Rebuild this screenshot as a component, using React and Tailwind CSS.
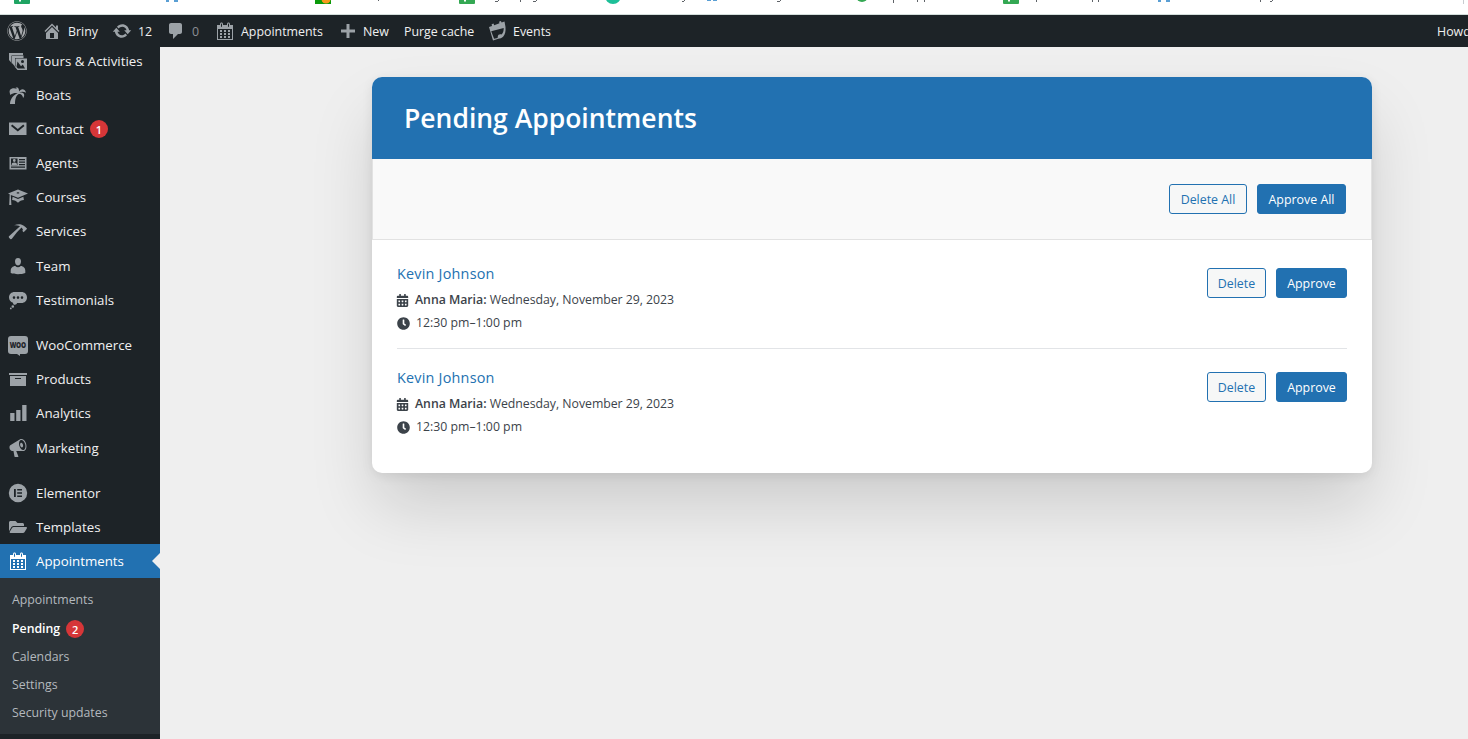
import React from 'react';
import { FaWordpress, FaFolderOpen, FaCalendarAlt, FaClock } from 'react-icons/fa';

// 20x20 admin icons
const paths = {
  home: 'M16 8.5l1.53 1.53-1.06 1.06L10 4.6l-6.47 6.49-1.06-1.06L10 2.5l4 4v-2h2v4zm-6-2.46l6 5.99V18H4v-5.97zM12 17v-5H8v5h4z',
  update: 'M10.2 3.28c3.53 0 6.43 2.61 6.92 6h2.08l-3.5 4-3.5-4h2.32c-.45-1.97-2.21-3.45-4.32-3.45-1.45 0-2.73.71-3.54 1.78L4.95 5.66C6.23 4.2 8.11 3.28 10.2 3.28zm-.4 13.44c-3.52 0-6.43-2.61-6.92-6H.8l3.5-4c1.17 1.33 2.33 2.67 3.5 4H5.48c.45 1.97 2.21 3.45 4.32 3.45 1.45 0 2.73-.71 3.54-1.78l1.71 1.95c-1.28 1.46-3.15 2.38-5.25 2.38z',
  comment: 'M5 2h9c1.1 0 2 .9 2 2v7c0 1.1-.9 2-2 2h-2l-5 5v-5H5c-1.1 0-2-.9-2-2V4c0-1.1.9-2 2-2z',
  plus: 'M17 8.5v3h-5.5V17h-3v-5.5H3v-3h5.5V3h3v5.5z',
  calendar: 'M15 4h3v15H2V4h3V3c0-.41.15-.76.44-1.06.29-.29.65-.44 1.06-.44s.77.15 1.06.44c.29.3.44.65.44 1.06v1h4V3c0-.41.15-.76.44-1.06.29-.29.65-.44 1.06-.44s.77.15 1.06.44c.29.3.44.65.44 1.06v1zM6 3v2.5c0 .14.05.26.15.36.09.09.21.14.35.14s.26-.05.35-.14c.1-.1.15-.22.15-.36V3c0-.14-.05-.26-.15-.35-.09-.1-.21-.15-.35-.15s-.26.05-.35.15c-.1.09-.15.21-.15.35zm7 0v2.5c0 .14.05.26.14.36.1.09.22.14.36.14s.26-.05.36-.14c.09-.1.14-.22.14-.36V3c0-.14-.05-.26-.14-.35-.1-.1-.22-.15-.36-.15s-.26.05-.36.15c-.09.09-.14.21-.14.35zM17 18V8H3v10h14zM7 9v2H5V9h2zm2 0h2v2H9V9zm4 2V9h2v2h-2zm-6 1v2H5v-2h2zm2 0h2v2H9v-2zm4 2v-2h2v2h-2zm-6 1v2H5v-2h2zm4 2H9v-2h2v2zm4 0h-2v-2h2v2z',
  events: 'M1 6l3-1-.4-1.7 1.9-.7.7 1.7 5.3-2-.5-1.6 1.9-.7.7 1.6 2.9-1 1 5.4c.3 4-.2 7.5-2.4 9.8-1.3 1.4-3 1.7-4.8 2L5 19.5zm2.2 4.2l2.9 7.6 3.5-.7c.2-1.2.1-2.5 1-3.3.9-.8 2-.7 2.9-.3 1.7-1.5 2.3-3.5 2.2-6.5z',
  images: 'M1 2h14v2H4v8.5L1 9zM3.5 4.5h12V7H7v8.5l-3.5-4zM7.5 7.5H19V19H9.5l-3-3.5h1zM8.5 16l1.5 1.5h7l-2.2-4-1.8 1.7-3.5-4.7zM14.5 9a1.5 1.5 0 100 3 1.5 1.5 0 000-3z',
  palm: 'M8.58 2.39c.32 0 .59.05.81.14 1.25.55 1.69 2.24 1.7 3.97.59-.82 2.15-2.29 3.41-2.29s2.94.73 3.53 3.55c-1.13-.65-2.42-.94-3.65-.94-1.26 0-2.45.32-3.29.89.4-.11.86-.16 1.33-.16 1.39 0 2.9.45 3.4 1.31.68 1.16.47 3.38-.76 4.14-.14-2.1-1.69-4.12-3.47-4.12-.44 0-.88.12-1.33.38C8 10.62 7 14.56 7 19H2c0-5.53 4.21-9.65 7.68-10.79-.56-.09-1.17-.15-1.82-.15C6.1 8.06 4.05 8.5 2.35 10c-.48-1.3-.78-2.43-.78-3.4 0-.86.24-1.57.76-2.09 1.05-.96 2.32-1.35 3.53-1.35 1.11 0 2.17.33 3 .83-.32-.58-.73-1.13-1.28-1.6z',
  mail: 'M1 3.5h17.5V16H1zm3.2 2L3 7l6.8 5.5L16.5 7l-1.2-1.5-5.5 4.4z',
  id: 'M1.5 4h17v12.5h-17zM3 5.5v6.8h6.5V5.5zM3 13.5v1.2h14v-1.2zM11 6v1.2h6V6zm0 2.5v1.2h6V8.5zm0 2.5v1.2h6V11zM4.9 7.5a1.4 1.4 0 112.8 0 1.4 1.4 0 01-2.8 0zM3.6 12c0-2 1-2.6 2.7-2.6s2.7.6 2.7 2.6z',
  learn: 'M10 2.5l10 4-10 4.3-7.2-2.9.6 10.1H1.2L1.7 7.3 0 6.5zm0 2.7c-.8 0-1.4.3-1.4.7s.6.7 1.4.7 1.4-.3 1.4-.7-.6-.7-1.4-.7zM4.6 9.8L10 12l5.4-2.2.5 3.2c-2.3.2-4.5 1.2-5.9 2.7-1.4-1.5-3.6-2.5-5.9-2.7z',
  hammer: 'M17.7 6.32l1.41 1.42-3.47 3.41-1.42-1.42.84-.82c-.32-.76-.81-1.57-1.51-2.31l-4.61 4.59-5.06 6.5c-.39.59-1.02.59-1.62.2l-1.2-1.21c-.39-.59-.39-1.22.2-1.61L12 5.35c-1.37-.86-3.41-1.06-5.87-1.08 2.7-1.12 5.35-1.33 6.98-.7 1.7.66 2.82 1.2 4.59 2.75z',
  user: 'M10 9.5c-2.1 0-3-2-3-4.2C7 3.2 8.2 2 10 2s3 1.2 3 3.3c0 2.2-.9 4.2-3 4.2zM7.3 10c.8.8 1.7 1.2 2.7 1.2s1.9-.4 2.7-1.2c2.6 0 4.6 2.3 4.6 4.5V17c-2.1.8-4.6 1.2-7.3 1.2S4.8 17.8 2.7 17v-2.5C2.7 12.3 4.7 10 7.3 10z',
  thought: 'M6.5 2h7C16.5 2 19 4.2 19 7.5S16.5 13 13.5 13H9c-.2 1.7-2.8 2.4-3.7.9-.3-.4-.3-.8-.3-1.2C2.6 12.1 1 10 1 7.5 1 4.2 3.5 2 6.5 2zM6 6.3a1.3 1.3 0 100 2.6 1.3 1.3 0 000-2.6zm4 0a1.3 1.3 0 100 2.6 1.3 1.3 0 000-2.6zm4 0a1.3 1.3 0 100 2.6 1.3 1.3 0 000-2.6zM4.8 15.2a1.3 1.3 0 110 2.6 1.3 1.3 0 010-2.6zM2.8 17.5a.9.9 0 110 1.8.9.9 0 010-1.8z',
  archive: 'M19 4v2H1V4h18zM2 7h16v10H2V7zm11 3V9H7v1h6z',
  chart: 'M18.5 18V2h-4.3v16zm-6 0V7H8.2v11zm-6 0v-8H2.2v8z',
  megaphone: 'M18.15 5.94c.46 1.62.38 3.22-.02 4.48-.42 1.28-1.26 2.18-2.3 2.48-.16.06-.26.06-.4.06-.06.02-.12.02-.18.02-.06.02-.14.02-.22.02h-6.8l2.22 5.5c.02.14-.06.26-.14.34-.08.1-.24.16-.34.16H6.95c-.1 0-.26-.06-.34-.16-.08-.08-.16-.2-.14-.34l-1-5.5H4.25l-.02-.02c-.5.06-1.08-.18-1.54-.62s-.88-1.08-1.06-1.88c-.24-.8-.2-1.56-.02-2.2.18-.62.58-1.08 1.06-1.3l.02-.02 9-5.4c.1-.06.18-.1.24-.16.06-.04.14-.08.24-.12.16-.08.28-.12.5-.18 1.04-.3 2.24.1 3.22.98s1.84 2.24 2.26 3.86zm-2.58 5.98h-.02c.4-.1.74-.34 1.04-.7.58-.7.86-1.76.86-3.04 0-.64-.1-1.3-.28-1.98-.34-1.36-1.02-2.5-1.78-3.24s-1.68-1.1-2.46-.88c-.82.22-1.4.96-1.7 2-.32 1.04-.28 2.36.06 3.72.38 1.36 1 2.5 1.8 3.24.78.74 1.62 1.1 2.48.88zm-2.54-7.08c.22-.04.42-.02.62.04.38.16.76.48 1.02 1s.42 1.2.42 1.78c0 .3-.04.56-.12.8-.18.48-.44.84-.86.94-.34.1-.8-.06-1.14-.4s-.64-.86-.78-1.5c-.18-.62-.12-1.24.02-1.72s.48-.84.82-.94z',
  elementor: 'M10 .8a9.2 9.2 0 100 18.4A9.2 9.2 0 0010 .8zM6 6h1.8v8H6zm3.2 0H14v1.6H9.2zm0 3.2H14v1.6H9.2zm0 3.2H14V14H9.2z',
};

const Icon = ({ name, className = 'size-5' }) => (
  <svg viewBox="0 0 20 20" className={className} fill="currentColor" fillRule="evenodd">
    <path d={paths[name]} />
  </svg>
);

const WooIcon = () => (
  <span className="relative flex h-[18px] w-5 items-center justify-center rounded-[3px] bg-[#9ca2a7] text-[#1d2327]">
    <span className="scale-x-75 text-[8.5px] font-extrabold leading-none tracking-[-0.3px]">WOO</span>
    <span className="absolute left-[9px] top-[18px] border-l-[3px] border-t-2 border-l-transparent border-t-[#9ca2a7]" />
  </span>
);

const menu = [
  [
    { icon: 'images', label: 'Tours & Activities' },
    { icon: 'palm', label: 'Boats' },
    { icon: 'mail', label: 'Contact', count: 1 },
    { icon: 'id', label: 'Agents' },
    { icon: 'learn', label: 'Courses' },
    { icon: 'hammer', label: 'Services' },
    { icon: 'user', label: 'Team' },
    { icon: 'thought', label: 'Testimonials' },
  ],
  [
    { icon: 'woo', label: 'WooCommerce' },
    { icon: 'archive', label: 'Products' },
    { icon: 'chart', label: 'Analytics' },
    { icon: 'megaphone', label: 'Marketing' },
  ],
  [
    { icon: 'elementor', label: 'Elementor' },
    { icon: 'folder', label: 'Templates' },
    { icon: 'calendar', label: 'Appointments', active: true },
  ],
];

const submenu = [
  { label: 'Appointments' },
  { label: 'Pending', count: 2 },
  { label: 'Calendars' },
  { label: 'Settings' },
  { label: 'Security updates' },
];

const appointments = [
  { id: 1, name: 'Kevin Johnson', calendar: 'Anna Maria', date: 'Wednesday, November 29, 2023', time: '12:30 pm–1:00 pm' },
  { id: 2, name: 'Kevin Johnson', calendar: 'Anna Maria', date: 'Wednesday, November 29, 2023', time: '12:30 pm–1:00 pm' },
];

const Count = ({ value }) => (
  <span className="ml-1.5 mt-px flex size-[18px] items-center justify-center rounded-full bg-[#d63638] text-[11px] font-semibold leading-none text-white">
    {value}
  </span>
);

// Lower edge of the browser's bookmarks bar
const BookmarksBar = () => (
  <div className="h-[15px] shrink-0 border-b border-[#d3dedb] bg-white">
    <svg width="1468" height="14" viewBox="0 0 1468 14" className="block">
      <g fill="#1fa463">
        <rect x="14" y="-6" width="16" height="10" rx="1" />
        <rect x="459" y="-6" width="16" height="10" rx="1" fill="#34a853" />
        <rect x="1003" y="-6" width="16" height="10" rx="1" fill="#34a853" />
      </g>
      <g fill="#fff">
        <rect x="19" y="0" width="2" height="1.5" />
        <rect x="464" y="0" width="2" height="1.5" />
        <rect x="1008" y="0" width="2" height="1.5" />
      </g>
      <rect x="315" y="-6" width="16" height="10" fill="#0a9a0a" />
      <circle cx="326" cy="-1" r="4.5" fill="#f79a1e" />
      <circle cx="613" cy="-4" r="8" fill="#1dbf98" />
      <circle cx="862" cy="-4" r="6" fill="#34a853" />
      <g fill="#5a9fd4">
        <rect x="166" y="0" width="3" height="2" />
        <rect x="174" y="0" width="4" height="2" />
        <rect x="707" y="0" width="4" height="1" />
        <rect x="713" y="0" width="4" height="1" />
        <rect x="1158" y="0" width="3" height="2" />
        <rect x="1166" y="0" width="4" height="2" />
      </g>
      <g fill="#5f6368">
        <rect x="378" y="0" width="1" height="1" />
        <rect x="495" y="1" width="3" height="1" />
        <rect x="498" y="0" width="1" height="1" />
        <rect x="520" y="0" width="1" height="2" />
        <rect x="533" y="1" width="3" height="1" />
        <rect x="536" y="0" width="1" height="1" />
        <rect x="682" y="1" width="2" height="1" />
        <rect x="684" y="0" width="1" height="1" />
        <rect x="777" y="1" width="3" height="1" />
        <rect x="780" y="0" width="1" height="1" />
        <rect x="893" y="0" width="1" height="3" />
        <rect x="917" y="0" width="1" height="2" />
        <rect x="924" y="0" width="1" height="2" />
        <rect x="1036" y="0" width="1" height="2" />
        <rect x="1092" y="0" width="1" height="2" />
        <rect x="1098" y="0" width="1" height="2" />
        <rect x="1260" y="0" width="1" height="2" />
        <rect x="1270" y="1" width="2" height="1" />
        <rect x="1272" y="0" width="1" height="1" />
      </g>
      <rect x="1463" y="0" width="1" height="4" fill="#c8ccd0" />
    </svg>
  </div>
);

const AdminBar = () => (
  <header className="flex h-8 shrink-0 items-center overflow-hidden whitespace-nowrap bg-[#1d2327] pl-[7px] text-[12.4px] text-[#f0f0f1]">
    <FaWordpress className="size-5 shrink-0 text-[#a7aaad]" />
    <div className="ml-[15px] flex w-[70px] shrink-0 items-center">
      <Icon name="home" className="mr-1.5 size-5 text-[#9ca2a7]" />
      <span className="pt-0.5">Briny</span>
    </div>
    <div className="flex w-[54px] shrink-0 items-center">
      <Icon name="update" className="mr-1.5 size-5 text-[#9ca2a7]" />
      <span className="pt-0.5">12</span>
    </div>
    <div className="flex w-[49px] shrink-0 items-center text-[#8c8f94]">
      <Icon name="comment" className="mr-1.5 size-5 text-[#9ca2a7]" />
      <span className="pt-0.5">0</span>
    </div>
    <div className="flex w-[123px] shrink-0 items-center">
      <Icon name="calendar" className="mr-1.5 size-5 text-[#9ca2a7]" />
      <span className="pt-0.5">Appointments</span>
    </div>
    <div className="flex w-[66px] shrink-0 items-center">
      <Icon name="plus" className="mr-[5px] size-5 text-[#9ca2a7]" />
      <span className="pt-0.5">New</span>
    </div>
    <div className="w-[84px] shrink-0 pt-0.5">Purge cache</div>
    <div className="flex shrink-0 items-center">
      <Icon name="events" className="mr-[5px] size-5 text-[#9ca2a7]" />
      <span className="pt-0.5">Events</span>
    </div>
    <div className="ml-auto w-[31px] shrink-0 overflow-hidden pt-0.5">Howdy</div>
  </header>
);

const MenuIcon = ({ name }) => {
  if (name === 'woo') return <WooIcon />;
  if (name === 'folder') return <FaFolderOpen className="size-[18px]" />;
  return <Icon name={name} />;
};

const MenuItem = ({ item }) => (
  <li
    className={
      item.active
        ? 'relative flex h-[34.2px] items-center bg-[#2271b1] text-white'
        : 'flex h-[34.2px] items-center text-[#f0f0f1]'
    }
  >
    <span className={item.active ? 'flex w-9 justify-center text-white' : 'flex w-9 justify-center text-[#9ca2a7]'}>
      <MenuIcon name={item.icon} />
    </span>
    <span>{item.label}</span>
    {item.count && <Count value={item.count} />}
    {item.active && (
      <span className="absolute right-0 top-[9px] border-y-8 border-r-8 border-y-transparent border-r-[#efefef]" />
    )}
  </li>
);

const Sidebar = () => (
  <aside className="w-40 shrink-0 overflow-hidden bg-[#1d2327]">
    <nav className="-mt-[3.6px] text-[13.3px] leading-[18px]">
      {menu.map((group, i) => (
        <ul key={i} className={i > 0 ? 'mt-[11px]' : ''}>
          {group.map((item) => (
            <MenuItem key={item.label} item={item} />
          ))}
        </ul>
      ))}
      <ul className="bg-[#2c3338] pb-[6.5px] pt-[7.6px] text-[12.3px] text-[#b4b9be]">
        {submenu.map((item) => (
          <li
            key={item.label}
            className={item.count ? 'flex h-[29.5px] items-center pl-3 font-semibold text-white' : 'flex h-[28px] items-center pl-3'}
          >
            {item.label}
            {item.count && <Count value={item.count} />}
          </li>
        ))}
      </ul>
    </nav>
  </aside>
);

const Button = ({ primary, className, children }) => (
  <button
    type="button"
    className={`h-[30px] rounded-[3px] border border-[#2271b1] pt-0.5 text-[12.4px] ${
      primary ? 'bg-[#2271b1] text-white' : 'bg-[#f6f7f7] text-[#2271b1]'
    } ${className}`}
  >
    {children}
  </button>
);

const Appointment = ({ item }) => (
  <li className="flex items-start justify-between border-t border-[#e2e4e7] pb-[13px] pt-[19px] first:border-t-0">
    <div className="text-[12.3px] text-[#3c434a]">
      <h2 className="-mt-px text-[14.4px] font-medium leading-[22px] tracking-[0.22px] text-[#2271b1]">{item.name}</h2>
      <p className="mt-1 flex h-[22px] items-center">
        <FaCalendarAlt className="mr-[5px] size-[13px] -translate-x-px" />
        <span className="tracking-[-0.03px]">
          <span className="font-semibold">{item.calendar}:</span> {item.date}
        </span>
      </p>
      <p className="mt-px flex h-[23px] items-center">
        <FaClock className="mr-1.5 size-[13px]" />
        {item.time}
      </p>
    </div>
    <div className="mt-1 flex gap-2.5">
      <Button className="w-[59px]">Delete</Button>
      <Button primary className="w-[71px]">Approve</Button>
    </div>
  </li>
);

const App = () => {
  return (
    <div className="flex h-[739px] w-[1468px] flex-col overflow-hidden bg-[#efefef] font-['Open_Sans','Noto_Sans',sans-serif]">
      <BookmarksBar />
      <AdminBar />
      <div className="flex min-h-0 flex-1">
        <Sidebar />
        <main className="flex-1 pl-[212px] pt-[30px]">
          <section className="h-[396px] w-[1000px] overflow-hidden rounded-[10px] bg-white shadow-[0_36px_66px_-4px_rgba(0,0,0,0.15),0_3px_12px_rgba(0,0,0,0.08)]">
            <div className="flex h-[82px] items-center bg-[#2271b1] px-8 pt-0.5">
              <h1 className="text-[26.5px] font-semibold text-white">Pending Appointments</h1>
            </div>
            <div className="flex h-[81px] items-center justify-end gap-2.5 border border-t-0 border-[#e2e2e2] bg-[#f9f9f9] px-[25px]">
              <Button className="w-[78px]">Delete All</Button>
              <Button primary className="w-[89px]">Approve All</Button>
            </div>
            <ul className="px-[25px] pt-[5px]">
              {appointments.map((item) => (
                <Appointment key={item.id} item={item} />
              ))}
            </ul>
          </section>
        </main>
      </div>
    </div>
  );
};

export default App;
